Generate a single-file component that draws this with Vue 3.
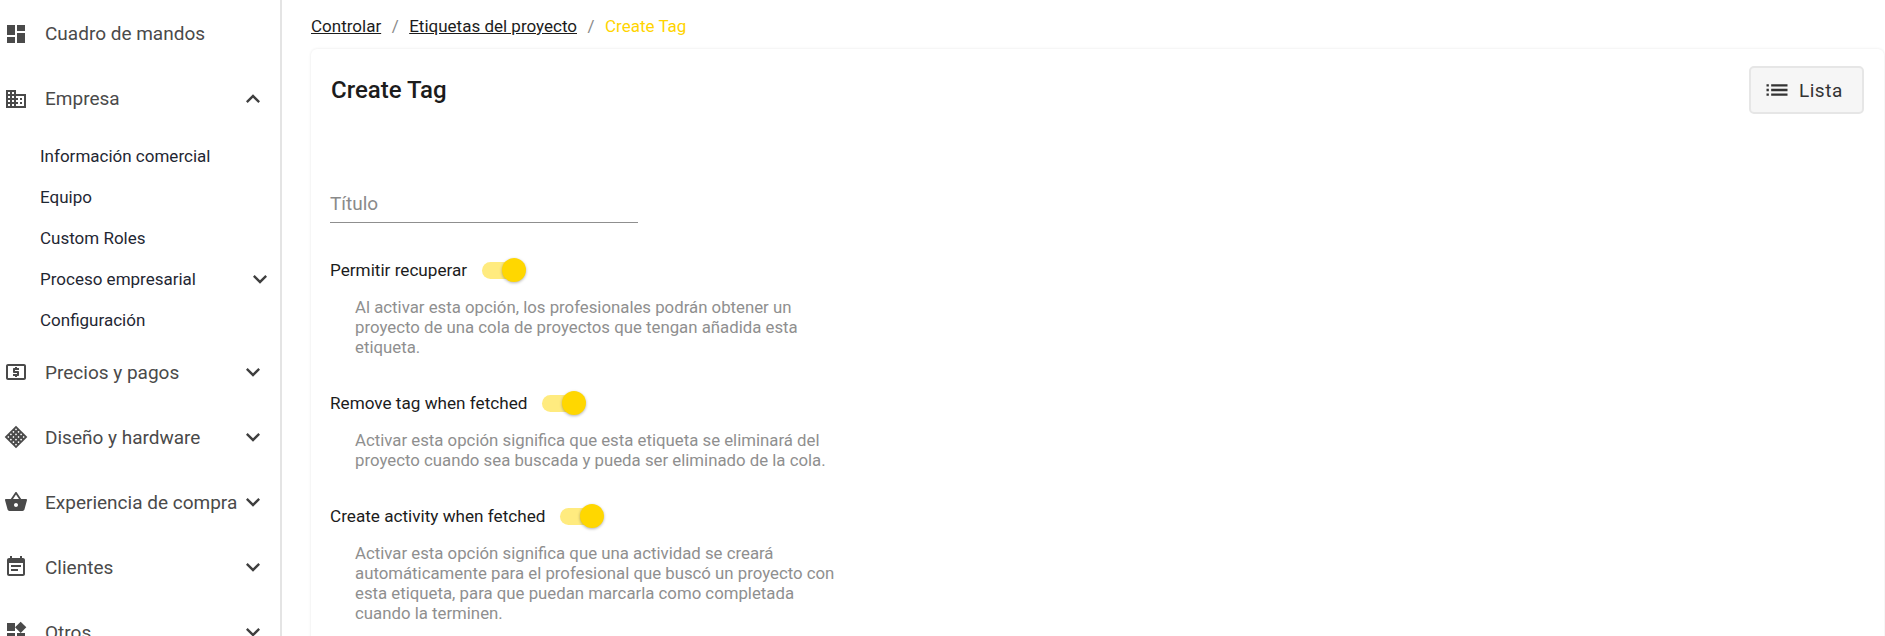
<script setup>
// icons
const icons = {
  dashboard: 'M3 13h8V3H3v10zm0 8h8v-6H3v6zm10 0h8V11h-8v10zm0-18v6h8V3h-8z',
  domain: 'M12 7V3H2v18h20V7H12zM6 19H4v-2h2v2zm0-4H4v-2h2v2zm0-4H4V9h2v2zm0-4H4V5h2v2zm4 12H8v-2h2v2zm0-4H8v-2h2v2zm0-4H8V9h2v2zm0-4H8V5h2v2zm10 12h-8v-2h2v-2h-2v-2h2v-2h-2V9h8v10zm-2-8h-2v2h2v-2zm0 4h-2v2h2v-2z',
  atm: 'M11 17h2v-1h1c.55 0 1-.45 1-1v-3c0-.55-.45-1-1-1h-3v-1h4V8h-2V7h-2v1h-1c-.55 0-1 .45-1 1v3c0 .55.45 1 1 1h3v1H9v2h2v1zm9-13H4c-1.11 0-1.99.89-1.99 2L2 18c0 1.11.89 2 2 2h16c1.11 0 2-.89 2-2V6c0-1.11-.89-2-2-2zm0 14H4V6h16v12z',
  basket: 'M17.21 9l-4.38-6.56c-.19-.28-.51-.42-.83-.42-.32 0-.64.14-.83.43L6.79 9H2c-.55 0-1 .45-1 1 0 .09.01.18.04.27l2.54 9.27c.23.84 1 1.46 1.92 1.46h13c.92 0 1.69-.62 1.93-1.46l2.54-9.27L23 10c0-.55-.45-1-1-1h-4.79zM9 9l3-4.4L15 9H9zm3 8c-1.1 0-2-.9-2-2s.9-2 2-2 2 .9 2 2-.9 2-2 2z',
  event: 'M17 10H7v2h10v-2zm2-7h-1V1h-2v2H8V1H6v2H5c-1.11 0-1.99.9-1.99 2L3 19c0 1.1.89 2 2 2h14c1.1 0 2-.9 2-2V5c0-1.1-.9-2-2-2zm0 16H5V8h14v11zm-5-5H7v2h7v-2z',
  widgets: 'M13 13v8h8v-8h-8zM3 21h8v-8H3v8zM3 3v8h8V3H3zm13.66-1.31L11 7.34 16.66 13l5.66-5.66-5.66-5.65z',
}
const chevronDown = 'M16.59 8.59L12 13.17 7.41 8.59 6 10l6 6 6-6z'
const chevronUp = 'M12 8l-6 6 1.41 1.41L12 10.83l4.59 4.58L18 14z'
const listIcon = 'M3 13h2v-2H3v2zm0 4h2v-2H3v2zm0-8h2V7H3v2zm4 4h14v-2H7v2zm0 4h14v-2H7v2zM7 7v2h14V7H7z'

// holes of the diamond grid in the hardware icon
const gridHoles = []
for (let r = 0; r < 4; r++) {
  for (let c = 0; c < 4; c++) gridHoles.push({ x: 6.6 + c * 3.6, y: 6.6 + r * 3.6 })
}

const subItems = [
  { name: 'Información comercial' },
  { name: 'Equipo' },
  { name: 'Custom Roles' },
  { name: 'Proceso empresarial', more: true },
  { name: 'Configuración' },
]

const menuAfter = [
  { name: 'Precios y pagos', icon: 'atm' },
  { name: 'Diseño y hardware', icon: 'grid' },
  { name: 'Experiencia de compra', icon: 'basket' },
  { name: 'Clientes', icon: 'event' },
  { name: 'Otros', icon: 'widgets' },
]

const options = [
  {
    label: 'Permitir recuperar',
    text: 'Al activar esta opción, los profesionales podrán obtener un proyecto de una cola de proyectos que tengan añadida esta etiqueta.',
  },
  {
    label: 'Remove tag when fetched',
    text: 'Activar esta opción significa que esta etiqueta se eliminará del proyecto cuando sea buscada y pueda ser eliminado de la cola.',
  },
  {
    label: 'Create activity when fetched',
    text: 'Activar esta opción significa que una actividad se creará automáticamente para el profesional que buscó un proyecto con esta etiqueta, para que puedan marcarla como completada cuando la terminen.',
  },
]
</script>

<template>
  <div class="page">
    <aside class="sidebar">
      <div class="menuRow">
        <svg class="menuRow__icon" viewBox="0 0 24 24"><path :d="icons.dashboard" /></svg>
        <span class="menuRow__name">Cuadro de mandos</span>
      </div>
      <div class="menuRow">
        <svg class="menuRow__icon" viewBox="0 0 24 24"><path :d="icons.domain" /></svg>
        <span class="menuRow__name">Empresa</span>
        <svg class="menuRow__chevron" viewBox="0 0 24 24"><path :d="chevronUp" /></svg>
      </div>
      <ul class="subMenu">
        <li v-for="item in subItems" :key="item.name" class="subMenu__item">
          <span>{{ item.name }}</span>
          <svg v-if="item.more" class="subMenu__chevron" viewBox="0 0 24 24"><path :d="chevronDown" /></svg>
        </li>
      </ul>
      <div v-for="item in menuAfter" :key="item.name" class="menuRow">
        <svg class="menuRow__icon" viewBox="0 0 24 24">
          <g v-if="item.icon === 'grid'" transform="rotate(45 12 12)">
            <rect x="4" y="4" width="16" height="16" />
            <circle v-for="hole in gridHoles" :key="hole.x + '-' + hole.y" class="menuRow__hole" :cx="hole.x" :cy="hole.y" r="0.85" />
          </g>
          <path v-else :d="icons[item.icon]" />
        </svg>
        <span class="menuRow__name">{{ item.name }}</span>
        <svg class="menuRow__chevron" viewBox="0 0 24 24"><path :d="chevronDown" /></svg>
      </div>
    </aside>

    <main class="content">
      <nav class="breadcrumbs">
        <a class="breadcrumbs__link">Controlar</a>
        <span class="breadcrumbs__sep">/</span>
        <a class="breadcrumbs__link">Etiquetas del proyecto</a>
        <span class="breadcrumbs__sep">/</span>
        <span class="breadcrumbs__current">Create Tag</span>
      </nav>

      <section class="card">
        <header class="card__head">
          <h1 class="card__title">Create Tag</h1>
          <button class="listBtn">
            <svg class="listBtn__icon" viewBox="0 0 24 24"><path :d="listIcon" /></svg>
            <span>Lista</span>
          </button>
        </header>

        <div class="field">Título</div>

        <div class="options">
          <div v-for="option in options" :key="option.label" class="option">
            <div class="option__head">
              <span class="option__label">{{ option.label }}</span>
              <span class="switch"><span class="switch__knob"></span></span>
            </div>
            <p class="option__text">{{ option.text }}</p>
          </div>
        </div>
      </section>
    </main>
  </div>
</template>

<style>
html,
body {
  margin: 0;
  background: #fff;
  overflow: hidden;
}
</style>

<style scoped>
.page {
  display: flex;
  width: 1885px;
  height: 636px;
  overflow: hidden;
  font-family: Roboto, "Liberation Sans", sans-serif;
  background: #fff;
}

.sidebar {
  flex: none;
  box-sizing: border-box;
  width: 282px;
  padding-top: 1px;
  border-right: 2px solid #e4e4e4;
  overflow: hidden;
}

.menuRow {
  display: flex;
  align-items: center;
  height: 65px;
  padding-left: 4px;
  color: #4a4a4a;
}

.menuRow__icon {
  flex: none;
  width: 24px;
  height: 24px;
  overflow: visible;
  fill: #4a4a4a;
}

.menuRow__hole {
  fill: #fff;
}

.menuRow__name {
  flex: 1;
  margin-left: 17px;
  font-size: 19px;
  white-space: nowrap;
}

.menuRow__chevron {
  flex: none;
  width: 28px;
  height: 28px;
  margin-right: 13px;
  fill: #3f3f3f;
}

.subMenu {
  margin: 0;
  padding: 5px 0 0 40px;
  list-style: none;
}

.subMenu__item {
  display: flex;
  align-items: center;
  justify-content: space-between;
  height: 40.8px;
  padding-right: 6px;
  font-size: 17px;
  color: #1f2733;
}

.subMenu__chevron {
  width: 28px;
  height: 28px;
  fill: #3f3f3f;
}

.content {
  flex: 1;
  min-width: 0;
  padding-left: 29px;
}

.breadcrumbs {
  display: flex;
  align-items: center;
  gap: 10.5px;
  height: 49px;
  padding: 3px 0 0;
  box-sizing: border-box;
  font-size: 17px;
}

.breadcrumbs__link {
  color: #1c1c1c;
  text-decoration: underline;
}

.breadcrumbs__sep {
  color: #8a8a8a;
}

.breadcrumbs__current {
  color: #ffd400;
}

.card {
  box-sizing: border-box;
  width: 1573px;
  height: 620px;
  padding: 0 20px 0 19px;
  border-radius: 6px;
  background: #fff;
  box-shadow: 0 0 3px rgba(0, 0, 0, 0.1);
}

.card__head {
  display: flex;
  align-items: flex-start;
  justify-content: space-between;
  padding-top: 17px;
}

.card__title {
  margin: 10px 0 0 1px;
  font-size: 24px;
  font-weight: 500;
  color: #1c1c1c;
}

.listBtn {
  display: flex;
  align-items: center;
  gap: 8px;
  box-sizing: border-box;
  width: 115px;
  height: 48px;
  padding: 0 0 0 12px;
  border: 2px solid #e6e6e6;
  border-radius: 5px;
  background: #f6f6f6;
  font-family: inherit;
  font-size: 19px;
  letter-spacing: 0.5px;
  color: #333;
}

.listBtn__icon {
  width: 28px;
  height: 28px;
  fill: #333;
}

.field {
  box-sizing: border-box;
  width: 308px;
  height: 46px;
  margin-top: 63px;
  padding-top: 15px;
  border-bottom: 1px solid #8f8f8f;
  font-size: 19px;
  color: #8a8a8a;
}

.options {
  padding-top: 1px;
}

.option__head {
  display: flex;
  align-items: center;
  gap: 15px;
  height: 26px;
  margin-top: 33px;
}

.option__label {
  font-size: 17.15px;
  color: #1c1c1c;
}

.switch {
  position: relative;
  width: 39px;
  height: 17px;
  margin-right: 4px;
  border-radius: 9px;
  background: #ffeb7f;
}

.switch__knob {
  position: absolute;
  top: -4px;
  right: -5px;
  width: 24px;
  height: 24px;
  border-radius: 50%;
  background: #ffd700;
  box-shadow: 0 1px 3px rgba(0, 0, 0, 0.3);
}

.option__text {
  width: 490px;
  margin: 14px 0 0 25px;
  font-size: 16.8px;
  line-height: 20px;
  color: #8f8f8f;
}
</style>
